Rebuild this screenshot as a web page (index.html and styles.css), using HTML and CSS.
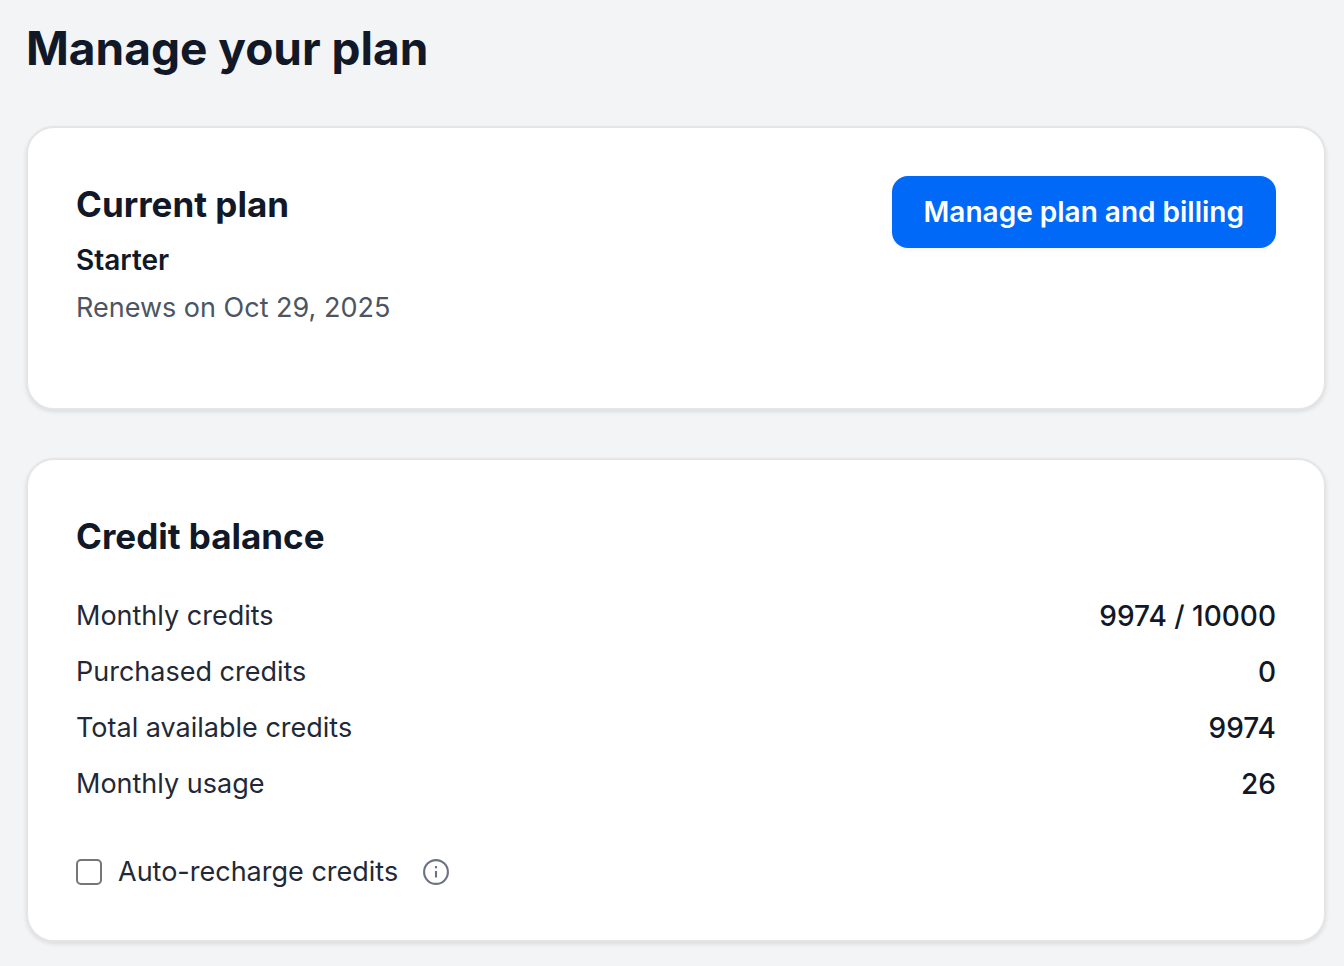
FILE: index.html
```html
<!DOCTYPE html>
<html lang="en">
<head>
<meta charset="utf-8">
<meta name="viewport" content="width=device-width, initial-scale=1">
<title>Manage your plan</title>
<link rel="stylesheet" href="styles.css">
</head>
<body>
<main class="page">
  <h1 class="page-title">Manage your plan</h1>
  <section class="card plan">
    <div>
      <h2 class="card-title">Current plan</h2>
      <p class="plan-name">Starter</p>
      <p class="plan-renewal">Renews on Oct 29, 2025</p>
    </div>
    <button class="button" type="button">Manage plan and billing</button>
  </section>
  <section class="card">
    <h2 class="card-title">Credit balance</h2>
    <dl class="credits">
      <div class="credit-row"><dt>Monthly credits</dt><dd>9974 / 10000</dd></div>
      <div class="credit-row"><dt>Purchased credits</dt><dd>0</dd></div>
      <div class="credit-row"><dt>Total available credits</dt><dd>9974</dd></div>
      <div class="credit-row"><dt>Monthly usage</dt><dd>26</dd></div>
    </dl>
    <div class="recharge">
      <input class="checkbox" type="checkbox" id="auto-recharge">
      <label for="auto-recharge">Auto-recharge credits</label>
      <button class="info" type="button" aria-label="About auto-recharge">
        <svg viewBox="0 0 28 28" width="28" height="28" fill="none" stroke="currentColor" stroke-width="2.1"><circle cx="14" cy="14" r="11.9"/><path d="M14 13v6.4M14 8v2.2"/></svg>
      </button>
    </div>
  </section>
</main>
</body>
</html>
```
FILE: styles.css
```css
* { box-sizing: border-box; }
body {
  margin: 0;
  background: #f3f4f6;
  color: #111827;
  font: 27px/40px Inter, "Liberation Sans", sans-serif;
}
h1, h2, p, dl, dd { margin: 0; }
.page { padding: 16px 18px 24px 26px; }
.page-title {
  margin-bottom: 46px;
  font-size: 46px;
  line-height: 64px;
  font-weight: 700;
}
.card {
  padding: 48px;
  border: 2px solid #e5e5e6;
  border-radius: 28px;
  background: #fff;
  box-shadow: 0 2px 4px rgba(0, 0, 0, 0.1);
}
.card + .card { margin-top: 48px; }
.card-title {
  font-size: 35px;
  line-height: 56px;
  font-weight: 700;
}
.plan {
  display: flex;
  justify-content: space-between;
  align-items: flex-start;
  padding-bottom: 80px;
}
.plan-name { margin-top: 8px; font-size: 28px; font-weight: 600; }
.plan-renewal { margin-top: 8px; color: #4b5563; }
.button {
  padding: 16px 32px;
  border: 0;
  border-radius: 16px;
  background: #0069f8;
  box-shadow: 0 2px 4px rgba(0, 0, 0, 0.05);
  color: #fff;
  font: inherit;
  font-size: 28px;
  font-weight: 600;
}
.credits { display: grid; gap: 16px; margin-top: 32px; }
.credit-row { display: flex; justify-content: space-between; color: #1f2937; }
.credit-row dd { color: #111827; font-size: 28px; font-weight: 500; }
.recharge { display: flex; align-items: center; margin-top: 48px; color: #1f2937; }
.checkbox {
  appearance: none;
  width: 26px;
  height: 26px;
  margin: 0 16px 0 0;
  border: 2px solid #767676;
  border-radius: 5px;
  background: #fff;
}
.checkbox:checked { background: #0069f8; }
.info {
  display: flex;
  margin-left: 24px;
  padding: 0;
  border: 0;
  background: none;
  color: #6b7280;
}
```
